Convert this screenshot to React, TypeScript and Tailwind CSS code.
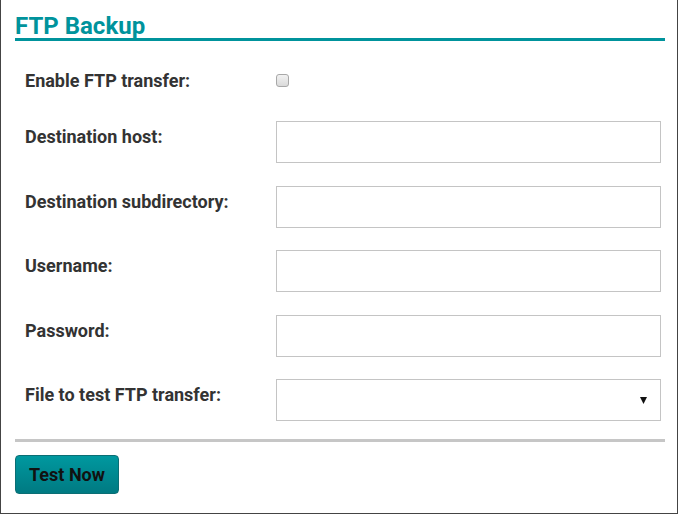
export default function App() {
  const rows = [
    { label: "Destination host:", mt: "mt-[28px]" },
    { label: "Destination subdirectory:", mt: "mt-[23px]" },
    { label: "Username:", mt: "mt-[22px]" },
    { label: "Password:", mt: "mt-[23px]", type: "password" },
  ];

  return (
    <div className="w-[678px] h-[514px] bg-white border-x border-b border-[#444] pl-[14px] pr-[12px] font-['Roboto',sans-serif] text-[#333]">
      <h2 className="pt-[14px] text-[24px] leading-[24px] font-bold text-[#00939c] border-b-[3px] border-[#00939c]">
        FTP Backup
      </h2>

      <div className="mt-[26px] h-[26px] flex items-center">
        <label className="w-[261px] pl-[10px] text-[18px] font-bold leading-[21px]">Enable FTP transfer:</label>
        <input
          type="checkbox"
          className="appearance-none w-[13px] h-[13px] border border-[#a8a8a8] rounded-[3px] bg-linear-to-b from-[#f2f2f2] to-[#dadada]"
        />
      </div>

      {rows.map((r) => (
        <div key={r.label} className={`${r.mt} flex`}>
          <label className="w-[261px] pl-[10px] pt-[5px] text-[18px] font-bold leading-[21px]">{r.label}</label>
          <input
            type={r.type ?? "text"}
            className="w-[385px] h-[42px] border border-[#c4c4c4] bg-white outline-none px-2"
          />
        </div>
      ))}

      <div className="mt-[22px] flex">
        <label className="w-[261px] pl-[10px] pt-[5px] text-[18px] font-bold leading-[21px]">File to test FTP transfer:</label>
        <div className="relative w-[385px] h-[42px]">
          <select className="appearance-none w-full h-full border border-[#c4c4c4] bg-white outline-none px-2" />
          <svg className="absolute left-[364px] top-[18px] pointer-events-none" width="7" height="7" viewBox="0 0 7 7">
            <polygon points="0,0 7,0 3.5,7" fill="#111" />
          </svg>
        </div>
      </div>

      <div className="mt-[18px] h-[3px] bg-[#c6c6c6]" />

      <button className="mt-[13px] w-[104px] h-[39px] rounded-[4px] border border-[#0b6e74] bg-linear-to-b from-[#00989f] to-[#007a82] text-[18px] font-bold text-[#111] leading-none">
        Test Now
      </button>
    </div>
  );
}
